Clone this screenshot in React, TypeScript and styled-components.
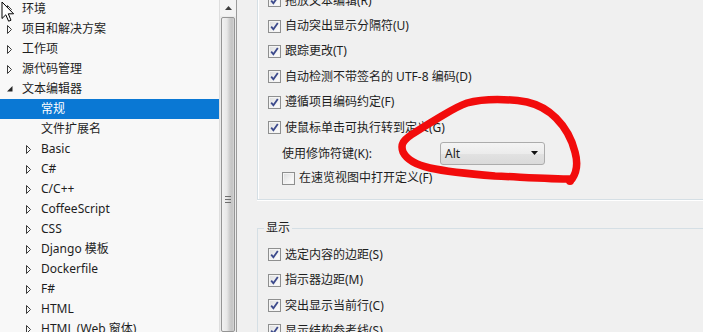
import styled, { createGlobalStyle } from 'styled-components'

const GlobalStyle = createGlobalStyle`
  html, body {
    margin: 0;
    padding: 0;
    background: #f0f0f0;
  }
  body {
    font-family: "Noto Sans", "Noto Sans CJK SC", sans-serif;
    font-size: 12px;
    color: #1e1e1e;
  }
`

type NodeState = 'collapsed' | 'expanded' | 'leaf'

interface TreeNode {
  label: string
  level: 0 | 1
  state: NodeState
  selected?: boolean
}

const treeNodes: TreeNode[] = [
  { label: '环境', level: 0, state: 'collapsed' },
  { label: '项目和解决方案', level: 0, state: 'collapsed' },
  { label: '工作项', level: 0, state: 'collapsed' },
  { label: '源代码管理', level: 0, state: 'collapsed' },
  { label: '文本编辑器', level: 0, state: 'expanded' },
  { label: '常规', level: 1, state: 'leaf', selected: true },
  { label: '文件扩展名', level: 1, state: 'leaf' },
  { label: 'Basic', level: 1, state: 'collapsed' },
  { label: 'C#', level: 1, state: 'collapsed' },
  { label: 'C/C++', level: 1, state: 'collapsed' },
  { label: 'CoffeeScript', level: 1, state: 'collapsed' },
  { label: 'CSS', level: 1, state: 'collapsed' },
  { label: 'Django 模板', level: 1, state: 'collapsed' },
  { label: 'Dockerfile', level: 1, state: 'collapsed' },
  { label: 'F#', level: 1, state: 'collapsed' },
  { label: 'HTML', level: 1, state: 'collapsed' },
  { label: 'HTML (Web 窗体)', level: 1, state: 'collapsed' },
]

function Expander({ state }: { state: NodeState }) {
  if (state === 'collapsed') {
    return (
      <svg width="6" height="9" viewBox="0 0 6 9">
        <path d="M0.5 0.5 L4.5 4.5 L0.5 8.5 Z" fill="none" stroke="#3a3a3a" strokeWidth="1" />
      </svg>
    )
  }
  if (state === 'expanded') {
    return (
      <svg width="6" height="6" viewBox="0 0 6 6">
        <path d="M5.5 0 L5.5 5.5 L0 5.5 Z" fill="#262626" />
      </svg>
    )
  }
  return null
}

function CheckBox({ checked }: { checked: boolean }) {
  return (
    <Box>
      {checked && (
        <svg width="9" height="9" viewBox="0 0 9 9">
          <path d="M1.2 4.6 L3.4 7.3 L7.8 0.9" fill="none" stroke="#3c4a8c" strokeWidth="1.8" />
        </svg>
      )}
    </Box>
  )
}

function Option({ label, checked = true, indent }: { label: string; checked?: boolean; indent?: boolean }) {
  return (
    <OptionRow $indent={indent}>
      <CheckBox checked={checked} />
      <span>{label}</span>
    </OptionRow>
  )
}

function App() {
  return (
    <>
      <GlobalStyle />
      <Window>
        <TreePane>
          <TreeList>
            {treeNodes.map((node) => (
              <TreeRow key={node.label} $level={node.level} $selected={node.selected}>
                <ExpanderSlot>
                  <Expander state={node.state} />
                </ExpanderSlot>
                {node.label}
              </TreeRow>
            ))}
          </TreeList>
        </TreePane>

        <ScrollBar>
          <ScrollButton>
            <svg width="7" height="4" viewBox="0 0 7 4">
              <path d="M0 4 L3.5 0 L7 4 Z" fill="#3c3c3c" />
            </svg>
          </ScrollButton>
          <Thumb>
            <Grip />
            <Grip />
            <Grip />
          </Thumb>
        </ScrollBar>

        <OptionsPane>
          <EditGroup>
            <Option label="拖放文本编辑(R)" />
            <Option label="自动突出显示分隔符(U)" />
            <Option label="跟踪更改(T)" />
            <Option label="自动检测不带签名的 UTF-8 编码(D)" />
            <Option label="遵循项目编码约定(F)" />
            <Option label="使鼠标单击可执行转到定义(G)" />
            <FieldRow>
              <FieldLabel>使用修饰符键(K):</FieldLabel>
              <Combo>
                Alt
                <svg width="7" height="4" viewBox="0 0 7 4">
                  <path d="M0 0 L7 0 L3.5 4 Z" fill="#111" />
                </svg>
              </Combo>
            </FieldRow>
            <Option label="在速览视图中打开定义(F)" checked={false} indent />
          </EditGroup>

          <DisplayGroup>
            <Legend>显示</Legend>
            <Option label="选定内容的边距(S)" />
            <Option label="指示器边距(M)" />
            <Option label="突出显示当前行(C)" />
            <Option label="显示结构参考线(S)" />
          </DisplayGroup>
        </OptionsPane>

        <Cursor width="14" height="22" viewBox="0 0 14 22">
          <path
            d="M1 1 L1 17.5 L4.8 13.8 L7.6 20.2 L10 19.2 L7.3 12.8 L12.6 12.8 Z"
            fill="#fff"
            stroke="#000"
            strokeWidth="1"
            strokeLinejoin="round"
          />
        </Cursor>

        <Scribble width="703" height="332" viewBox="0 0 703 332">
          <path
            d="M467 103 C485 98 510 99 527 102 C540 105 548 110 556 118 C566 128 572 140 575 152 C578 163 577 172 572 179
               C550 179 520 177 495 176 C470 174 448 172 430 168 C417 165 407 160 403 152 C400 144 404 140 411 135
               C420 129 430 123 440 117 C450 111 458 106 467 103"
            fill="none"
            stroke="#f20c0c"
            strokeWidth="7.5"
            strokeLinecap="round"
            strokeLinejoin="round"
          />
          <circle cx="570" cy="181" r="4" fill="#f20c0c" />
        </Scribble>
      </Window>
    </>
  )
}

const Window = styled.div`
  position: relative;
  display: flex;
  width: 703px;
  height: 332px;
  overflow: hidden;
  background: #f0f0f0;
`

const TreePane = styled.div`
  width: 219px;
  flex-shrink: 0;
  background: #f8f8f8;
  overflow: hidden;
`

const TreeList = styled.ul`
  list-style: none;
  margin: -1px 0 0;
  padding: 0;
`

const TreeRow = styled.li<{ $level: number; $selected?: boolean }>`
  display: flex;
  align-items: center;
  height: 20px;
  padding-left: ${(p) => (p.$level ? 26 : 7)}px;
  line-height: 20px;
  white-space: nowrap;
  color: ${(p) => (p.$selected ? '#ffffff' : '#1e1e1e')};
  background: ${(p) => (p.$selected ? '#0a78d4' : 'transparent')};
`

const ExpanderSlot = styled.span`
  display: flex;
  align-items: center;
  width: 15px;
  height: 20px;
  flex-shrink: 0;
`

const ScrollBar = styled.div`
  display: flex;
  flex-direction: column;
  width: 16px;
  flex-shrink: 0;
  background: #ececec;
  border-left: 1px solid #dedede;
  border-right: 1px solid #9a9a9a;
`

const ScrollButton = styled.div`
  display: flex;
  align-items: center;
  justify-content: center;
  height: 16px;
  flex-shrink: 0;
  background: #f3f3f3;
`

const Thumb = styled.div`
  display: flex;
  flex-direction: column;
  align-items: center;
  gap: 2px;
  height: 400px;
  margin: 1px 1px 0;
  padding-top: 178px;
  box-sizing: border-box;
  border: 1px solid #959595;
  border-radius: 2px;
  background: linear-gradient(to right, #f2f2f2 0%, #e8e8e8 40%, #cdcdcd 65%, #c4c4c4 85%, #d8d8d8 100%);
`

const Grip = styled.span`
  width: 6px;
  height: 1px;
  background: #6e6e6e;
`

const OptionsPane = styled.div`
  flex: 1;
  min-width: 0;
  display: flex;
  flex-direction: column;
  padding-left: 20px;
  overflow: hidden;
`

const EditGroup = styled.div`
  margin: -12px -20px 0 0;
  padding-bottom: 8px;
  border: 1px solid #d5dfe5;
  border-top: none;
  box-shadow: inset 1px 0 0 #fff, 0 1px 0 #fff;
`

const DisplayGroup = styled.fieldset`
  margin: 20px -20px 0 0;
  padding: 6px 0 0;
  border: 1px solid #d5dfe5;
  border-right: none;
  border-bottom: none;
  min-width: 0;
`

const Legend = styled.legend`
  margin-left: 6px;
  padding: 0 2px;
  line-height: 16px;
`

const OptionRow = styled.div<{ $indent?: boolean }>`
  display: flex;
  align-items: center;
  gap: 4px;
  height: 25.4px;
  padding-left: ${(p) => (p.$indent ? 24 : 10)}px;
  line-height: 16px;
  white-space: nowrap;
`

const Box = styled.span`
  display: flex;
  align-items: center;
  justify-content: center;
  width: 11px;
  height: 11px;
  flex-shrink: 0;
  border: 1px solid #8e8f8f;
  background: linear-gradient(135deg, #dadbdc 0%, #f3f3f3 60%, #ffffff 100%);
  box-shadow: inset 0 0 0 1px #f4f4f4;
`

const FieldRow = styled.div`
  display: flex;
  align-items: center;
  height: 25.4px;
  padding-left: 24px;
  white-space: nowrap;
`

const FieldLabel = styled.span`
  width: 158px;
  flex-shrink: 0;
`

const Combo = styled.div`
  display: flex;
  align-items: center;
  justify-content: space-between;
  width: 105px;
  height: 23px;
  box-sizing: border-box;
  padding: 0 6px 0 4px;
  border: 1px solid #acacac;
  border-radius: 3px;
  background: linear-gradient(to bottom, #f4f4f4 0%, #ececec 50%, #e2e2e2 51%, #dadada 100%);
  color: #1e1e1e;
`

const Cursor = styled.svg`
  position: absolute;
  left: 1px;
  top: 1px;
`

const Scribble = styled.svg`
  position: absolute;
  left: 0;
  top: 0;
  pointer-events: none;
`

export default App
